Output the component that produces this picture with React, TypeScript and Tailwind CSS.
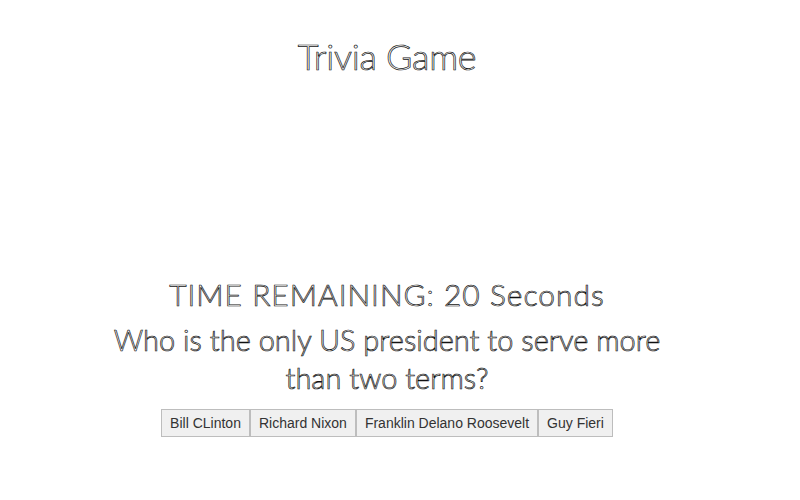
import React from "react";

const outline = "text-transparent antialiased [-webkit-text-stroke:0.7px_#111]";

export default function App() {
  const answers = ["Bill CLinton", "Richard Nixon", "Franklin Delano Roosevelt", "Guy Fieri"];
  return (
    <div className="w-[774px] h-[500px] bg-white flex flex-col items-center font-['Lato',sans-serif]">
      <h1 className={`mt-[32px] text-[36px] leading-[48px] font-light tracking-[-0.3px] ${outline}`}>Trivia Game</h1>
      <div className="h-[196px]" />
      <div className={`text-[30px] leading-[36px] font-light tracking-[1px] ${outline}`}>TIME REMAINING: 20 Seconds</div>
      <div className={`mt-[9px] w-[560px] text-center text-[29px] leading-[38px] font-light ${outline}`}>
        Who is the only US president to serve more than two terms?
      </div>
      <div className="mt-[12px] flex">
        {answers.map((a) => (
          <button
            key={a}
            className="h-[28px] px-[8px] bg-[#f0f0f0] border border-[#bdbdbd] text-[14px] text-[#333] font-['Liberation_Sans',sans-serif]"
          >
            {a}
          </button>
        ))}
      </div>
    </div>
  );
}
